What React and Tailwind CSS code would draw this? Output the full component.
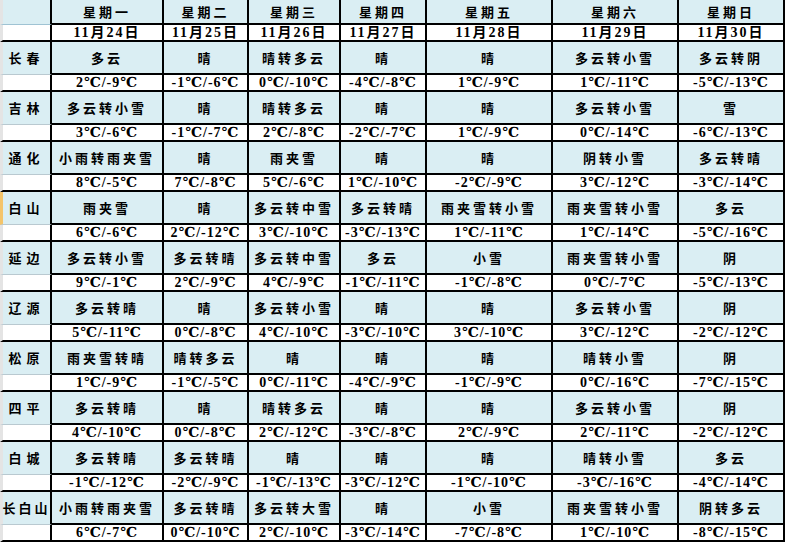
import React from "react";

const days = ["星期一", "星期二", "星期三", "星期四", "星期五", "星期六", "星期日"];
const dates = ["11月24日", "11月25日", "11月26日", "11月27日", "11月28日", "11月29日", "11月30日"];

const widths = ["w-[112px]", "w-[85px]", "w-[92px]", "w-[86px]", "w-[126px]", "w-[126px]", "w-[106px]"];

const rows = [
  ["长春", [["多云", "2℃/-9℃"], ["晴", "-1℃/-6℃"], ["晴转多云", "0℃/-10℃"], ["晴", "-4℃/-8℃"], ["晴", "1℃/-9℃"], ["多云转小雪", "1℃/-11℃"], ["多云转阴", "-5℃/-13℃"]]],
  ["吉林", [["多云转小雪", "3℃/-6℃"], ["晴", "-1℃/-7℃"], ["晴转多云", "2℃/-8℃"], ["晴", "-2℃/-7℃"], ["晴", "1℃/-9℃"], ["多云转小雪", "0℃/-14℃"], ["雪", "-6℃/-13℃"]]],
  ["通化", [["小雨转雨夹雪", "8℃/-5℃"], ["晴", "7℃/-8℃"], ["雨夹雪", "5℃/-6℃"], ["晴", "1℃/-10℃"], ["晴", "-2℃/-9℃"], ["阴转小雪", "3℃/-12℃"], ["多云转晴", "-3℃/-14℃"]]],
  ["白山", [["雨夹雪", "6℃/-6℃"], ["晴", "2℃/-12℃"], ["多云转中雪", "3℃/-10℃"], ["多云转晴", "-3℃/-13℃"], ["雨夹雪转小雪", "1℃/-11℃"], ["雨夹雪转小雪", "1℃/-14℃"], ["多云", "-5℃/-16℃"]]],
  ["延边", [["多云转小雪", "9℃/-1℃"], ["多云转晴", "2℃/-9℃"], ["多云转中雪", "4℃/-9℃"], ["多云", "-1℃/-11℃"], ["小雪", "-1℃/-8℃"], ["雨夹雪转小雪", "0℃/-7℃"], ["阴", "-5℃/-13℃"]]],
  ["辽源", [["多云转晴", "5℃/-11℃"], ["晴", "0℃/-8℃"], ["多云转小雪", "4℃/-10℃"], ["晴", "-3℃/-10℃"], ["晴", "3℃/-10℃"], ["多云转小雪", "3℃/-12℃"], ["阴", "-2℃/-12℃"]]],
  ["松原", [["雨夹雪转晴", "1℃/-9℃"], ["晴转多云", "-1℃/-5℃"], ["晴", "0℃/-11℃"], ["晴", "-4℃/-9℃"], ["晴", "-1℃/-9℃"], ["晴转小雪", "0℃/-16℃"], ["阴", "-7℃/-15℃"]]],
  ["四平", [["多云转晴", "4℃/-10℃"], ["晴", "0℃/-8℃"], ["晴转多云", "2℃/-12℃"], ["晴", "-3℃/-8℃"], ["晴", "2℃/-9℃"], ["多云转小雪", "2℃/-11℃"], ["阴", "-2℃/-12℃"]]],
  ["白城", [["多云转晴", "-1℃/-12℃"], ["多云转晴", "-2℃/-9℃"], ["晴", "-1℃/-13℃"], ["晴", "-3℃/-12℃"], ["晴", "-1℃/-10℃"], ["晴转小雪", "-3℃/-16℃"], ["多云", "-4℃/-14℃"]]],
  ["长白山", [["小雨转雨夹雪", "6℃/-7℃"], ["多云转晴", "0℃/-10℃"], ["多云转大雪", "2℃/-10℃"], ["晴", "-3℃/-14℃"], ["小雪", "-7℃/-8℃"], ["雨夹雪转小雪", "1℃/-10℃"], ["阴转多云", "-8℃/-15℃"]]],
];

const cjk = "font-['Noto_Sans_CJK_SC',sans-serif] font-bold text-[13px] tracking-[3px]";
const num = "font-['Liberation_Serif','DejaVu_Serif','Noto_Sans_CJK_SC',serif] font-bold text-[14px] leading-none tracking-[1px] pt-[1px]";

const Cell = ({ w, className = "", children }) => (
  <div className={`${w} shrink-0 flex items-center justify-center border-r-2 border-b-2 border-black overflow-hidden whitespace-nowrap ${className}`}>
    {children}
  </div>
);

export default function App() {
  return (
    <div className="w-[791px] h-[543px] overflow-hidden bg-white text-black">
      {/* header: weekdays */}
      <div className="flex h-[25px]">
        <div className="w-[52px] shrink-0 bg-[#daeef3] border-l-[3px] border-l-[#e4e4e4] border-r-2 border-r-black border-b border-b-[#9fc3d3]" />
        {days.map((d, i) => (
          <Cell key={d} w={widths[i]} className={`bg-[#daeef3] ${cjk}`}>{d}</Cell>
        ))}
      </div>
      {/* header: dates */}
      <div className="flex h-[17px]">
        <div className="w-[52px] shrink-0 bg-white border-l-[3px] border-l-[#e4e4e4] border-r-2 border-r-black border-b-2 border-b-black" />
        {dates.map((d, i) => (
          <Cell key={d} w={widths[i]} className={`bg-white ${num} tracking-[2px]`}>{d}</Cell>
        ))}
      </div>
      {rows.map(([city, data]) => (
        <div key={city}>
          <div className="flex h-[33px]">
            <div
              className={`w-[52px] shrink-0 flex items-center justify-center bg-[#daeef3] border-l-[3px] ${city === "白山" ? "border-l-[#f4c46a]" : "border-l-[#e4e4e4]"} border-r-2 border-r-black border-b border-b-[#b9c9d0] whitespace-nowrap ${cjk} ${city.length > 2 ? "tracking-[1px]" : "tracking-[5px]"}`}
            >
              {city}
            </div>
            {data.map(([w], i) => (
              <Cell key={i} w={widths[i]} className={`bg-[#daeef3] ${cjk}`}>{w}</Cell>
            ))}
          </div>
          <div className="flex h-[17px]">
            <div className="w-[52px] shrink-0 bg-white border-l-[3px] border-l-[#e4e4e4] border-r-2 border-r-black border-b-2 border-b-black" />
            {data.map(([, t], i) => (
              <Cell key={i} w={widths[i]} className={`bg-white ${num}`}>{t}</Cell>
            ))}
          </div>
        </div>
      ))}
    </div>
  );
}
